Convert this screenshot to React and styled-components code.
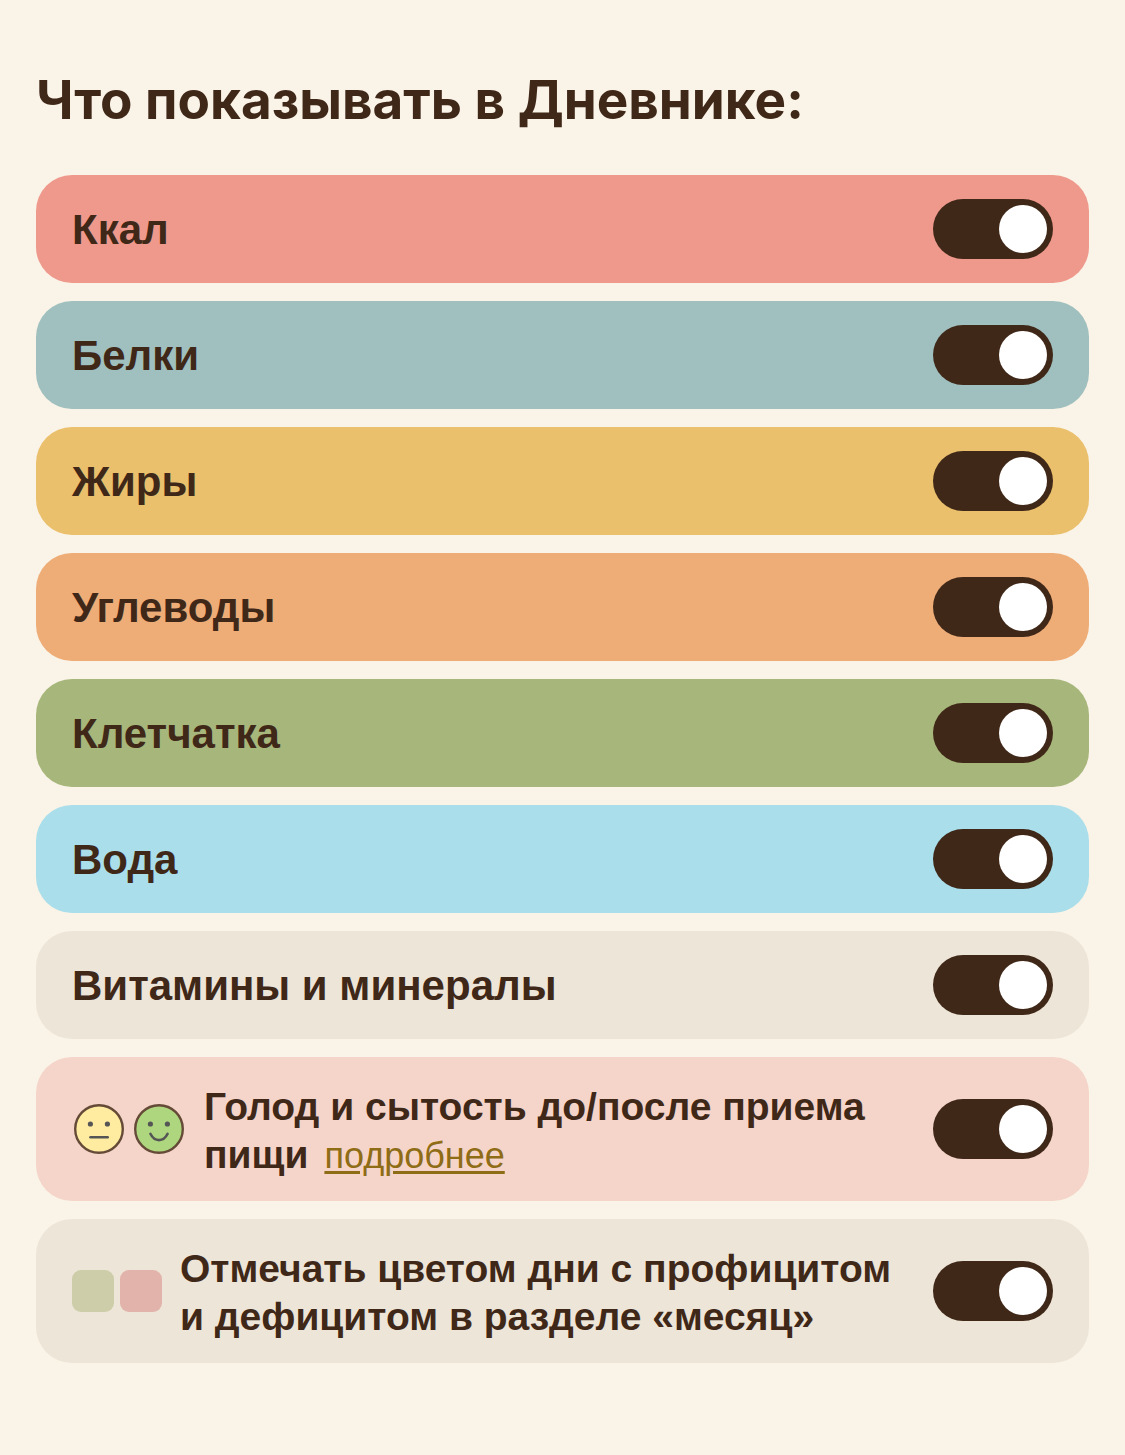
import React, { useState } from 'react';
import styled, { createGlobalStyle } from 'styled-components';

const nutrients = [
  { id: 'kcal', label: 'Ккал', color: '#ef998c' },
  { id: 'protein', label: 'Белки', color: '#9fc0be' },
  { id: 'fat', label: 'Жиры', color: '#eac06c' },
  { id: 'carbs', label: 'Углеводы', color: '#eeac77' },
  { id: 'fiber', label: 'Клетчатка', color: '#a7b67a' },
  { id: 'water', label: 'Вода', color: '#a9deea' },
  { id: 'vitamins', label: 'Витамины и минералы', color: '#ede5d7' },
];

const Face = ({ fill, mouth }) => (
  <StyledFace viewBox="0 0 50 50" aria-hidden="true">
    <circle cx="25" cy="25" r="23.8" fill={fill} stroke="#654b37" strokeWidth="2.4" />
    <circle cx="16.4" cy="20" r="2.6" fill="#555" />
    <circle cx="33.4" cy="20" r="2.6" fill="#555" />
    <path d={mouth} fill="none" stroke="#555" strokeWidth="2.6" strokeLinecap="round" />
  </StyledFace>
)

const Toggle = ({ id }) => {
  const [isOn, setIsOn] = useState(true);
  return (
    <StyledToggle
      id={id}
      type="checkbox"
      role="switch"
      checked={isOn}
      onChange={() => setIsOn(!isOn)}
    />
  )
}

const App = () => {
  return (
    <>
      <GlobalStyle />
      <StyledPage>
        <StyledTitle>Что показывать в Дневнике:</StyledTitle>
        <StyledList>
          {nutrients.map(({ id, label, color }) => (
            <StyledRow key={id} color={color}>
              <StyledLabel htmlFor={id}>{label}</StyledLabel>
              <Toggle id={id} />
            </StyledRow>
          ))}
          <StyledRow color="#f5d5c9">
            <StyledFaces>
              <Face fill="#ffeca0" mouth="M16.5 33.3H33.7" />
              <Face fill="#aed67e" mouth="M16.4 29.8C20.5 38.2 29.5 38.2 33.6 29.8" />
            </StyledFaces>
            <StyledText>
              <StyledNote htmlFor="hunger">Голод и сытость до/после приема пищи</StyledNote>
              <StyledLink href="#more">подробнее</StyledLink>
            </StyledText>
            <Toggle id="hunger" />
          </StyledRow>
          <StyledRow color="#ede5d7">
            <StyledSwatches>
              <StyledSwatch color="#cdcea9" />
              <StyledSwatch color="#e2b3aa" />
            </StyledSwatches>
            <StyledText>
              <StyledNote htmlFor="balance">Отмечать цветом дни с профицитом и дефицитом в разделе «месяц»</StyledNote>
            </StyledText>
            <Toggle id="balance" />
          </StyledRow>
        </StyledList>
      </StyledPage>
    </>
  )
}

export default App;

const GlobalStyle = createGlobalStyle`
  * {
    box-sizing:border-box;
  }

  body {
    margin:0;
    background-color:#faf3e7;
    color:#402819;
    font-family:"Liberation Sans", Arial, sans-serif;
  }
`
const StyledPage = styled.main`
  padding:68px 36px 92px;
`
const StyledTitle = styled.h1`
  margin:0 0 43px;
  font-family:Inter, sans-serif;
  font-size:53px;
  font-weight:700;
  line-height:64px;
`
const StyledList = styled.ul`
  display:flex;
  flex-flow:column nowrap;
  gap:18px;
  margin:0;
  padding:0;
  list-style:none;
`
const StyledRow = styled.li`
  display:flex;
  align-items:center;
  min-height:108px;
  padding:0 36px;
  border-radius:36px;
  background-color:${props => props.color};
`
const StyledLabel = styled.label`
  flex:1;
  padding-top:2px;
  font-size:42px;
  font-weight:700;
  line-height:50px;
`
const StyledText = styled.div`
  flex:1;
  padding:26px 36px 22px 0;
  font-size:39px;
  line-height:48px;
`
const StyledNote = styled.label`
  margin-right:16px;
  font-weight:700;
`
const StyledLink = styled.a`
  color:#8f6c16;
  font-size:36px;
  line-height:36px;
  text-decoration:underline;
  text-decoration-thickness:3px;
  text-underline-offset:3px;
`
const StyledFaces = styled.div`
  display:flex;
  gap:10px;
  margin:0 20px 0 2px;
`
const StyledFace = styled.svg`
  display:block;
  width:50px;
  height:50px;
`
const StyledSwatches = styled.div`
  display:flex;
  gap:6px;
  margin-right:18px;
`
const StyledSwatch = styled.span`
  width:42px;
  height:42px;
  border-radius:9px;
  background-color:${props => props.color};
`
const StyledToggle = styled.input`
  appearance:none;
  flex:none;
  display:flex;
  align-items:center;
  width:120px;
  height:60px;
  margin:0;
  padding:6px;
  border-radius:30px;
  background-color:#b5a596;
  cursor:pointer;
  transition:all .2s ease;

  &::before {
    content:'';
    width:48px;
    height:48px;
    border-radius:50%;
    background-color:#FFF;
    transition:all .2s ease;
  }
  &:checked {
    background-color:#402819;
  }
  &:checked::before {
    margin-left:60px;
  }
`
